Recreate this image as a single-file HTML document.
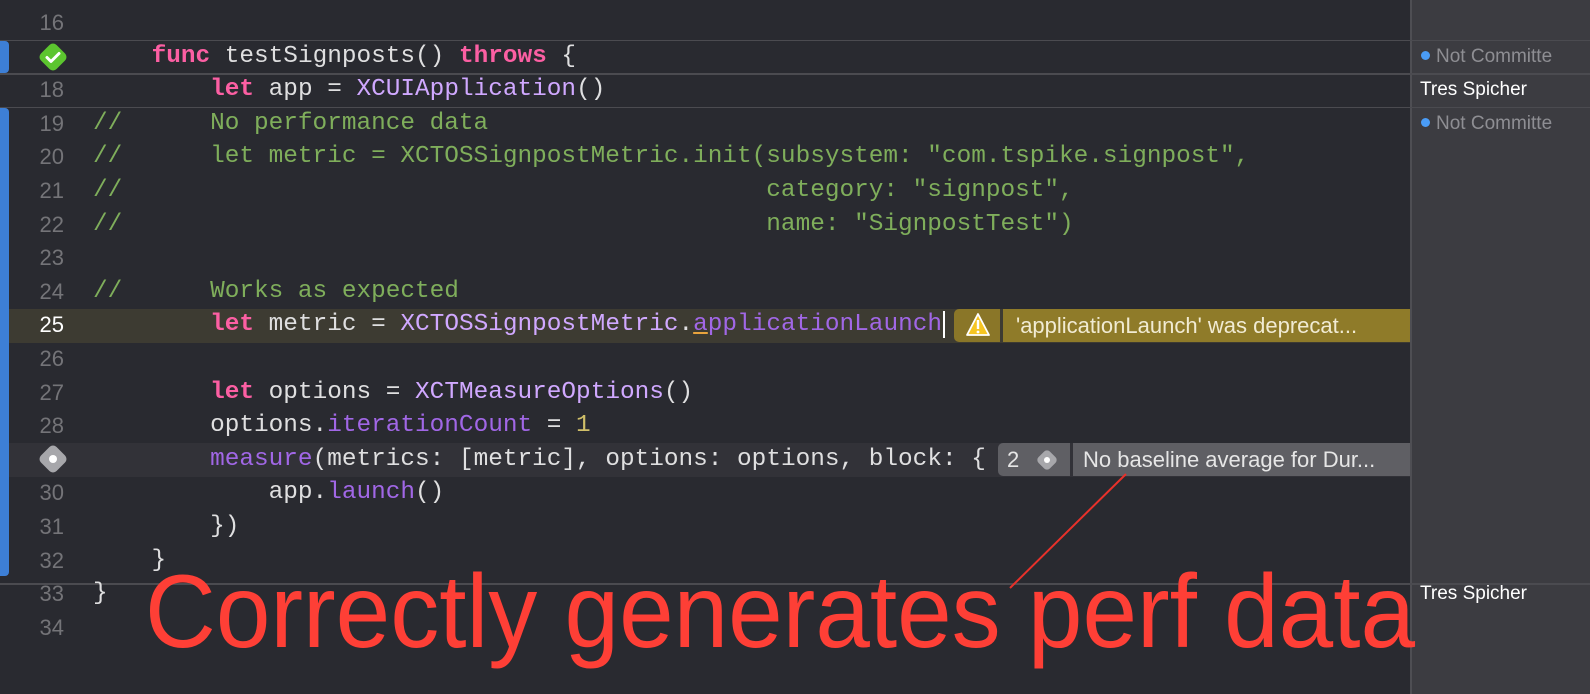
<!DOCTYPE html>
<html><head><meta charset="utf-8"><style>
*{margin:0;padding:0;box-sizing:border-box}
body{width:1590px;height:694px;background:#292a30;position:relative;overflow:hidden;font-family:"Liberation Mono",monospace}
.row{position:absolute;left:0;width:1410px;height:33.6px}
.ln{position:absolute;right:1346px;top:0;line-height:33.6px;font-size:22px;color:#747478;font-family:"Liberation Sans",sans-serif}
.code{position:absolute;left:93px;top:0;line-height:33.6px;font-size:24.4px;color:#dfdfe0;white-space:pre}
.k{color:#fc5fa3;font-weight:bold}.t{color:#d0a8ff}.m{color:#a167e6}.c{color:#7fae5b}.n{color:#d0bf69}
.hl{position:absolute;left:0;width:1590px;height:1.5px;background:#4b4b50}
.bar{position:absolute;left:0;width:9px;background:#3d7fd6;border-radius:0 4px 4px 0}
.side{position:absolute;left:1410px;top:0;width:180px;height:694px;background:#3c3c41;border-left:2px solid #4e4e53}
.st{position:absolute;left:1420px;font-family:"Liberation Sans",sans-serif;font-size:19px;line-height:33.6px;white-space:nowrap}
.badge{position:absolute;font-family:"Liberation Sans",sans-serif;font-size:22px;line-height:33px;height:33px;white-space:nowrap;overflow:hidden}
</style></head><body>
<div class="side"></div>

<div class="row" style="top:309px;background:#3d3b32"></div>
<div class="row" style="top:443px;background:#323238"></div>

<div class="hl" style="top:39.5px"></div>
<div class="hl" style="top:73px"></div>
<div class="hl" style="top:106.5px"></div>
<div class="hl" style="top:583px"></div>

<div class="bar" style="top:41px;height:32px"></div>
<div class="bar" style="top:108px;height:468px"></div>

<div class="row" style="top:6px"><div class="ln">16</div></div>
<div class="row" style="top:39.6px"><div class="code">    <span class="k">func</span> testSignposts() <span class="k">throws</span> {</div></div>
<div class="row" style="top:73.2px"><div class="ln">18</div><div class="code">        <span class="k">let</span> app = <span class="t">XCUIApplication</span>()</div></div>
<div class="row" style="top:106.8px"><div class="ln">19</div><div class="code c">//      No performance data</div></div>
<div class="row" style="top:140.4px"><div class="ln">20</div><div class="code c">//      let metric = XCTOSSignpostMetric.init(subsystem: "com.tspike.signpost",</div></div>
<div class="row" style="top:174px"><div class="ln">21</div><div class="code c">//                                            category: "signpost",</div></div>
<div class="row" style="top:207.6px"><div class="ln">22</div><div class="code c">//                                            name: "SignpostTest")</div></div>
<div class="row" style="top:241.2px"><div class="ln">23</div></div>
<div class="row" style="top:274.8px"><div class="ln">24</div><div class="code c">//      Works as expected</div></div>
<div class="row" style="top:308.4px"><div class="ln" style="color:#fff">25</div><div class="code">        <span class="k">let</span> metric = <span class="t">XCTOSSignpostMetric</span>.<span class="m" style="text-decoration:underline;text-decoration-color:#e8a33d">a</span><span class="m">pplicationLaunch</span><span style="border-left:2px solid #fff;margin-left:1px"></span></div></div>
<div class="row" style="top:342px"><div class="ln">26</div></div>
<div class="row" style="top:375.6px"><div class="ln">27</div><div class="code">        <span class="k">let</span> options = <span class="t">XCTMeasureOptions</span>()</div></div>
<div class="row" style="top:409.2px"><div class="ln">28</div><div class="code">        options.<span class="m">iterationCount</span> = <span class="n">1</span></div></div>
<div class="row" style="top:442.8px"><div class="code">        <span class="m">measure</span>(metrics: [metric], options: options, block: {</div></div>
<div class="row" style="top:476.4px"><div class="ln">30</div><div class="code">            app.<span class="m">launch</span>()</div></div>
<div class="row" style="top:510px"><div class="ln">31</div><div class="code">        })</div></div>
<div class="row" style="top:543.6px"><div class="ln">32</div><div class="code">    }</div></div>
<div class="row" style="top:577.2px"><div class="ln">33</div><div class="code">}</div></div>
<div class="row" style="top:610.8px"><div class="ln">34</div></div>

<svg style="position:absolute;left:37px;top:41px" width="32" height="32" viewBox="0 0 32 32"><rect x="5" y="5" width="22" height="22" rx="5" transform="rotate(45 16 16)" fill="#5cc52f"/><path d="M10 16.5l4 4 8-8" stroke="#fff" stroke-width="3" fill="none" stroke-linecap="round" stroke-linejoin="round"/></svg>
<svg style="position:absolute;left:37px;top:443px" width="32" height="32" viewBox="0 0 32 32"><rect x="5" y="5" width="22" height="22" rx="5" transform="rotate(45 16 16)" fill="#a7a7ab"/><circle cx="16" cy="16" r="4" fill="#fff"/></svg>

<div class="badge" style="left:954px;top:309px;width:46px;background:#8a7628;border-radius:5px 0 0 5px"></div>
<svg style="position:absolute;left:966px;top:312px" width="24" height="26" viewBox="0 0 24 26"><path d="M12 2L23 23H1Z" fill="#f6c522" stroke="#fff" stroke-width="1.8" stroke-linejoin="round"/><rect x="10.8" y="8" width="2.4" height="9" fill="#fff"/><circle cx="12" cy="20" r="1.4" fill="#fff"/></svg>
<div class="badge" style="left:1003px;top:309px;width:407px;background:#8f7b29;color:#f1ebd3;padding-left:13px">'applicationLaunch' was deprecat...</div>

<div class="badge" style="left:998px;top:443px;width:72px;background:#5f5f64;border-radius:5px 0 0 5px;color:#e6e6e6;padding-left:9px">2</div>
<svg style="position:absolute;left:1034px;top:447px" width="26" height="26" viewBox="0 0 26 26"><rect x="5" y="5" width="16" height="16" rx="4" transform="rotate(45 13 13)" fill="#a7a7ab"/><circle cx="13" cy="13" r="3" fill="#fff"/></svg>
<div class="badge" style="left:1073px;top:443px;width:337px;background:#5f5f64;color:#e6e6e6;padding-left:10px">No baseline average for Dur...</div>

<div class="st" style="top:39.6px;color:#8e8e93"><span style="display:inline-block;width:9px;height:9px;border-radius:50%;background:#4a9cf6;margin:0 6px 2px 1px;vertical-align:middle"></span>Not Committe</div>
<div class="st" style="top:73.2px;color:#fff">Tres Spicher</div>
<div class="st" style="top:106.8px;color:#8e8e93"><span style="display:inline-block;width:9px;height:9px;border-radius:50%;background:#4a9cf6;margin:0 6px 2px 1px;vertical-align:middle"></span>Not Committe</div>
<div class="st" style="top:577.2px;color:#fff">Tres Spicher</div>

<svg style="position:absolute;left:0;top:0" width="1590" height="694">
<line x1="1126" y1="474" x2="1010" y2="588" stroke="#e8312a" stroke-width="2"/>
<text x="145" y="647" font-family="Liberation Sans, sans-serif" font-size="104" fill="#fe3f36" textLength="1270" lengthAdjust="spacingAndGlyphs">Correctly generates perf data</text>
</svg>
</body></html>
